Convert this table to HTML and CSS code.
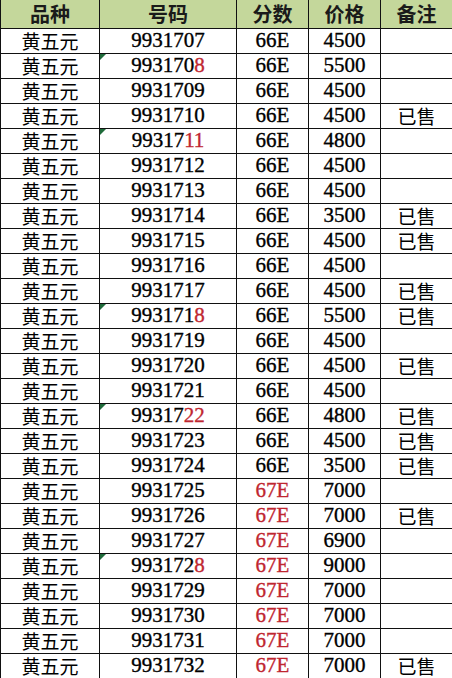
FILE: index.html
```html
<!DOCTYPE html>
<html lang="zh">
<head>
<meta charset="utf-8">
<link rel="stylesheet" href="styles.css">
</head>
<body>
<table class="sheet">
<colgroup><col class="c1"><col class="c2"><col class="c3"><col class="c4"><col class="c5"></colgroup>
<thead>
<tr><th>品种</th><th>号码</th><th>分数</th><th>价格</th><th>备注</th></tr>
</thead>
<tbody>
<tr><td class="cj">黄五元</td><td class="num">9931707</td><td class="num">66E</td><td class="num">4500</td><td class="cj"></td></tr>
<tr><td class="cj">黄五元</td><td class="num flag">993170<span class="red">8</span></td><td class="num">66E</td><td class="num">5500</td><td class="cj"></td></tr>
<tr><td class="cj">黄五元</td><td class="num">9931709</td><td class="num">66E</td><td class="num">4500</td><td class="cj"></td></tr>
<tr><td class="cj">黄五元</td><td class="num">9931710</td><td class="num">66E</td><td class="num">4500</td><td class="cj">已售</td></tr>
<tr><td class="cj">黄五元</td><td class="num flag">99317<span class="red">11</span></td><td class="num">66E</td><td class="num">4800</td><td class="cj"></td></tr>
<tr><td class="cj">黄五元</td><td class="num">9931712</td><td class="num">66E</td><td class="num">4500</td><td class="cj"></td></tr>
<tr><td class="cj">黄五元</td><td class="num">9931713</td><td class="num">66E</td><td class="num">4500</td><td class="cj"></td></tr>
<tr><td class="cj">黄五元</td><td class="num">9931714</td><td class="num">66E</td><td class="num">3500</td><td class="cj">已售</td></tr>
<tr><td class="cj">黄五元</td><td class="num">9931715</td><td class="num">66E</td><td class="num">4500</td><td class="cj">已售</td></tr>
<tr><td class="cj">黄五元</td><td class="num">9931716</td><td class="num">66E</td><td class="num">4500</td><td class="cj"></td></tr>
<tr><td class="cj">黄五元</td><td class="num">9931717</td><td class="num">66E</td><td class="num">4500</td><td class="cj">已售</td></tr>
<tr><td class="cj">黄五元</td><td class="num flag">993171<span class="red">8</span></td><td class="num">66E</td><td class="num">5500</td><td class="cj">已售</td></tr>
<tr><td class="cj">黄五元</td><td class="num">9931719</td><td class="num">66E</td><td class="num">4500</td><td class="cj"></td></tr>
<tr><td class="cj">黄五元</td><td class="num">9931720</td><td class="num">66E</td><td class="num">4500</td><td class="cj">已售</td></tr>
<tr><td class="cj">黄五元</td><td class="num">9931721</td><td class="num">66E</td><td class="num">4500</td><td class="cj"></td></tr>
<tr><td class="cj">黄五元</td><td class="num flag">99317<span class="red">22</span></td><td class="num">66E</td><td class="num">4800</td><td class="cj">已售</td></tr>
<tr><td class="cj">黄五元</td><td class="num">9931723</td><td class="num">66E</td><td class="num">4500</td><td class="cj">已售</td></tr>
<tr><td class="cj">黄五元</td><td class="num">9931724</td><td class="num">66E</td><td class="num">3500</td><td class="cj">已售</td></tr>
<tr><td class="cj">黄五元</td><td class="num">9931725</td><td class="num red">67E</td><td class="num">7000</td><td class="cj"></td></tr>
<tr><td class="cj">黄五元</td><td class="num">9931726</td><td class="num red">67E</td><td class="num">7000</td><td class="cj">已售</td></tr>
<tr><td class="cj">黄五元</td><td class="num">9931727</td><td class="num red">67E</td><td class="num">6900</td><td class="cj"></td></tr>
<tr><td class="cj">黄五元</td><td class="num flag">993172<span class="red">8</span></td><td class="num red">67E</td><td class="num">9000</td><td class="cj"></td></tr>
<tr><td class="cj">黄五元</td><td class="num">9931729</td><td class="num red">67E</td><td class="num">7000</td><td class="cj"></td></tr>
<tr><td class="cj">黄五元</td><td class="num">9931730</td><td class="num red">67E</td><td class="num">7000</td><td class="cj"></td></tr>
<tr><td class="cj">黄五元</td><td class="num">9931731</td><td class="num red">67E</td><td class="num">7000</td><td class="cj"></td></tr>
<tr><td class="cj">黄五元</td><td class="num">9931732</td><td class="num red">67E</td><td class="num">7000</td><td class="cj">已售</td></tr>
</tbody>
</table>
</body>
</html>
```
FILE: styles.css
```css
html, body {
  margin: 0;
  padding: 0;
  background: #ffffff;
}
.sheet {
  width: 452px;
  table-layout: fixed;
  border-collapse: collapse;
  color: #000000;
}
.c1 { width: 99px; }
.c2 { width: 137px; }
.c3 { width: 72px; }
.c4 { width: 72px; }
.c5 { width: 72px; }
.sheet th,
.sheet td {
  border: 1px solid #111111;
  padding: 0;
  text-align: center;
  vertical-align: middle;
  white-space: nowrap;
  overflow: hidden;
}
.sheet thead tr {
  height: 28px;
}
.sheet th {
  background: #c4d79b;
  font-family: "Noto Sans CJK SC", sans-serif;
  font-size: 20px;
  font-weight: 700;
  line-height: 26px;
  color: #1a1a1a;
  border-top: none;
}
.sheet tbody tr {
  height: 25px;
}
.sheet td {
  line-height: 23px;
}
.cj {
  font-family: "Noto Sans CJK SC", sans-serif;
  font-size: 19px;
  font-weight: 400;
}
.num {
  font-family: "Liberation Serif", "Noto Sans CJK SC", serif;
  font-size: 21px;
  -webkit-text-stroke: 0.35px currentColor;
}
.red {
  color: #bf2630;
}
.flag {
  position: relative;
}
.flag::before {
  content: "";
  position: absolute;
  left: 0;
  top: 0;
  border-style: solid;
  border-width: 6px 6px 0 0;
  border-color: #1f6b3a transparent transparent transparent;
}
```
